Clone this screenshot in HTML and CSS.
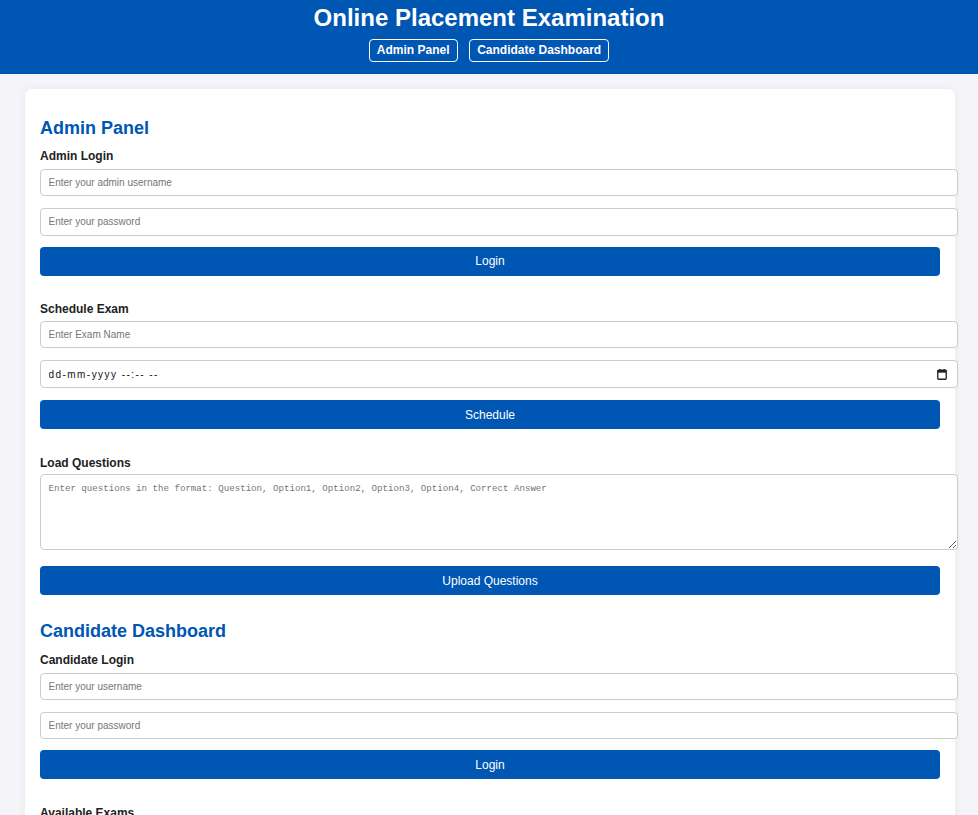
FILE: index.html
```html
<!DOCTYPE html>
<html lang="en">
<head>
<meta charset="utf-8">
<title>Online Placement Examination</title>
<link rel="stylesheet" href="styles.css">
</head>
<body>
<header class="site-header">
  <h1 class="site-title">Online Placement Examination</h1>
  <nav class="site-nav">
    <a class="nav-link" href="#admin">Admin Panel</a>
    <a class="nav-link" href="#candidate">Candidate Dashboard</a>
  </nav>
</header>
<main class="card">
  <section class="panel" id="admin">
    <h2 class="panel-title">Admin Panel</h2>
    <div class="block">
      <label class="field-label">Admin Login</label>
      <input class="field" type="text" placeholder="Enter your admin username">
      <input class="field field-last" type="password" placeholder="Enter your password">
      <button class="btn">Login</button>
    </div>
    <div class="block">
      <label class="field-label field-label-tight">Schedule Exam</label>
      <input class="field" type="text" placeholder="Enter Exam Name">
      <div class="date-wrap">
        <input class="field field-date" type="text" placeholder="dd-mm-yyyy --:-- --">
        <svg class="date-icon" width="10" height="11" viewBox="0 0 10 11" aria-hidden="true">
          <rect x="0.75" y="1.25" width="8.5" height="9" rx="0.8" fill="none" stroke="#222" stroke-width="1.3"/>
          <rect x="0.75" y="1.25" width="8.5" height="2.4" fill="#222"/>
          <rect x="2.2" y="0" width="1.3" height="2" fill="#222"/>
          <rect x="6.5" y="0" width="1.3" height="2" fill="#222"/>
        </svg>
      </div>
      <button class="btn">Schedule</button>
    </div>
    <div class="block block-last">
      <label class="field-label field-label-tight">Load Questions</label>
      <textarea class="field-area" placeholder="Enter questions in the format: Question, Option1, Option2, Option3, Option4, Correct Answer"></textarea>
      <button class="btn">Upload Questions</button>
    </div>
  </section>
  <section class="panel" id="candidate">
    <h2 class="panel-title">Candidate Dashboard</h2>
    <div class="block">
      <label class="field-label">Candidate Login</label>
      <input class="field" type="text" placeholder="Enter your username">
      <input class="field field-last" type="password" placeholder="Enter your password">
      <button class="btn">Login</button>
    </div>
    <div class="block">
      <label class="field-label">Available Exams</label>
      <p class="note">No exams scheduled yet.</p>
    </div>
  </section>
</main>
</body>
</html>
```
FILE: styles.css
```css
html, body {
  margin: 0;
  padding: 0;
}
body {
  background: #f4f4f9;
  font-family: "Liberation Sans", Arial, sans-serif;
  color: #333;
}
.site-header {
  background: #0056b3;
  color: #fff;
  text-align: center;
  padding: 4px 0 12px;
  height: 74px;
  box-sizing: border-box;
}
.site-title {
  margin: 0;
  font-size: 24px;
  font-weight: bold;
  line-height: 27.6px;
}
.site-nav {
  display: flex;
  justify-content: center;
  gap: 11.3px;
  margin-top: 7.8px;
}
.nav-link {
  display: inline-block;
  color: #fff;
  text-decoration: none;
  font-size: 12px;
  font-weight: bold;
  line-height: 13.4px;
  padding: 3.5px 7.2px;
  border: 1px solid #fff;
  border-radius: 4px;
}
.card {
  display: block;
  width: 930px;
  box-sizing: border-box;
  margin: 15px 0 0 25px;
  padding: 28.7px 15px 15px;
  background: #fff;
  border-radius: 7px;
  box-shadow: 0 0 8px rgba(0, 0, 0, 0.06);
}
.panel-title {
  margin: 0 0 12px;
  color: #0056b3;
  font-size: 18px;
  line-height: 20.7px;
  font-weight: bold;
}
.block {
  display: flex;
  flex-direction: column;
  align-items: flex-start;
  margin-bottom: 27.8px;
}
.block-last {
  margin-bottom: 25.8px;
}
.field-label {
  display: block;
  font-size: 12px;
  font-weight: bold;
  line-height: 13.8px;
  color: #222;
  margin-bottom: 5px;
}
.field-label-tight {
  margin-bottom: 3.5px;
}
.field {
  display: block;
  width: 918px;
  height: 27.2px;
  box-sizing: border-box;
  margin: 0 0 12px;
  padding: 0 7.5px;
  border: 1px solid #ccc;
  border-radius: 4px;
  background: #fff;
  font-family: "Liberation Sans", Arial, sans-serif;
  font-size: 10px;
  color: #111;
}
.field-last {
  margin-bottom: 11px;
}
.field::placeholder {
  color: #767676;
}
.date-wrap {
  position: relative;
  width: 918px;
}
.field-date {
  height: 28.5px;
  padding: 0 7.5px;
  margin-bottom: 12px;
  letter-spacing: 1.45px;
}
.field-date::placeholder {
  color: #111;
}
.date-icon {
  position: absolute;
  right: 11px;
  top: 9px;
}
.field-area {
  display: block;
  width: 918px;
  height: 76px;
  box-sizing: border-box;
  margin: 0 0 16px;
  padding: 7px 7.5px;
  border: 1px solid #ccc;
  border-radius: 4px;
  font-family: "Liberation Mono", "DejaVu Sans Mono", monospace;
  font-size: 9.15px;
  line-height: 14px;
  color: #111;
  resize: both;
}
.field-area::placeholder {
  color: #767676;
}
.btn {
  display: block;
  width: 900px;
  height: 29px;
  box-sizing: border-box;
  margin: 0;
  padding: 0;
  border: none;
  border-radius: 4px;
  background: #0056b3;
  color: #fff;
  font-family: "Liberation Sans", Arial, sans-serif;
  font-size: 12px;
  cursor: pointer;
}
.note {
  margin: 0;
  font-size: 10px;
  color: #555;
}
```
